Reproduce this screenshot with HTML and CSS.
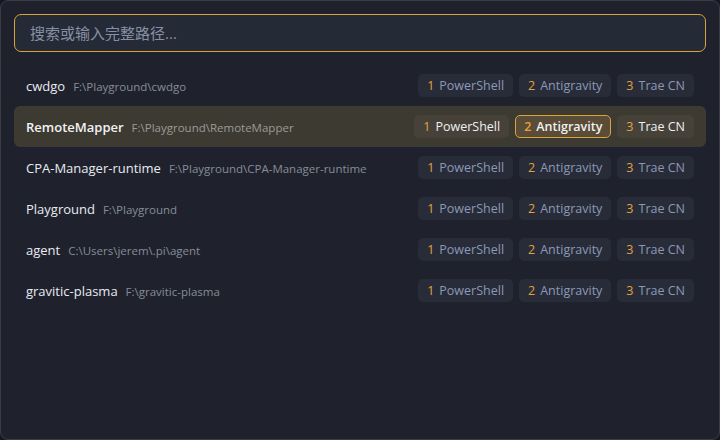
FILE: index.html
```html
<!DOCTYPE html>
<html lang="zh-CN">
<head>
<meta charset="utf-8">
<title>快速打开</title>
<link rel="stylesheet" href="styles.css">
</head>
<body>
<div class="window">
  <div class="search">
    <input class="search-input" type="text" placeholder="搜索或输入完整路径...">
  </div>
  <ul class="list">
    <li class="row">
      <div class="info"><span class="name">cwdgo</span><span class="path">F:\Playground\cwdgo</span></div>
      <div class="actions">
        <span class="chip"><b>1</b>PowerShell</span>
        <span class="chip"><b>2</b>Antigravity</span>
        <span class="chip"><b>3</b>Trae CN</span>
      </div>
    </li>
    <li class="row selected">
      <div class="info"><span class="name">RemoteMapper</span><span class="path">F:\Playground\RemoteMapper</span></div>
      <div class="actions">
        <span class="chip"><b>1</b>PowerShell</span>
        <span class="chip active"><b>2</b>Antigravity</span>
        <span class="chip"><b>3</b>Trae CN</span>
      </div>
    </li>
    <li class="row">
      <div class="info"><span class="name">CPA-Manager-runtime</span><span class="path">F:\Playground\CPA-Manager-runtime</span></div>
      <div class="actions">
        <span class="chip"><b>1</b>PowerShell</span>
        <span class="chip"><b>2</b>Antigravity</span>
        <span class="chip"><b>3</b>Trae CN</span>
      </div>
    </li>
    <li class="row">
      <div class="info"><span class="name">Playground</span><span class="path">F:\Playground</span></div>
      <div class="actions">
        <span class="chip"><b>1</b>PowerShell</span>
        <span class="chip"><b>2</b>Antigravity</span>
        <span class="chip"><b>3</b>Trae CN</span>
      </div>
    </li>
    <li class="row">
      <div class="info"><span class="name">agent</span><span class="path">C:\Users\jerem\.pi\agent</span></div>
      <div class="actions">
        <span class="chip"><b>1</b>PowerShell</span>
        <span class="chip"><b>2</b>Antigravity</span>
        <span class="chip"><b>3</b>Trae CN</span>
      </div>
    </li>
    <li class="row">
      <div class="info"><span class="name">gravitic-plasma</span><span class="path">F:\gravitic-plasma</span></div>
      <div class="actions">
        <span class="chip"><b>1</b>PowerShell</span>
        <span class="chip"><b>2</b>Antigravity</span>
        <span class="chip"><b>3</b>Trae CN</span>
      </div>
    </li>
  </ul>
</div>
</body>
</html>
```
FILE: styles.css
```css
html, body {
  margin: 0;
  padding: 0;
  background: #16181f;
}

body {
  width: 720px;
  height: 440px;
  font-family: "Open Sans", "Noto Sans", "Noto Sans CJK SC", sans-serif;
}

.window {
  box-sizing: border-box;
  width: 720px;
  height: 440px;
  background: #1f222d;
  border: 1px solid #3a3d46;
  border-radius: 8px;
  padding: 13px;
}

.search {
  display: flex;
}

.search-input {
  box-sizing: border-box;
  width: 100%;
  height: 38px;
  margin: 0;
  padding: 0 15px;
  background: #252a37;
  border: 1px solid #dba23c;
  border-radius: 7px;
  color: #e6e9ef;
  font-family: "Open Sans", "Noto Sans CJK SC", sans-serif;
  font-size: 15px;
  outline: none;
}

.search-input::placeholder {
  color: #8690a3;
}

.list {
  list-style: none;
  margin: 13px 0 0;
  padding: 0;
}

.row {
  display: flex;
  align-items: center;
  justify-content: space-between;
  height: 41px;
  padding: 0 12px;
  border-radius: 6px;
}

.row.selected {
  background: #3d3a32;
}

.info {
  display: flex;
  align-items: baseline;
  gap: 8px;
  padding-top: 1px;
}

.name {
  color: #e8ebf1;
  font-size: 13px;
}

.selected .name {
  font-weight: 600;
  color: #f2f2f2;
}

.path {
  color: #878c97;
  font-size: 11.5px;
}

.selected .path {
  color: #9b9a96;
}

.actions {
  display: flex;
  gap: 6px;
}

.chip {
  display: flex;
  align-items: center;
  gap: 5px;
  box-sizing: border-box;
  height: 23px;
  padding: 0 8px;
  background: #282c38;
  border: 1px solid transparent;
  border-radius: 5px;
  color: #8b99b6;
  font-size: 12.5px;
}

.chip b {
  font-weight: 400;
  color: #e3a23e;
}

.selected .chip {
  background: #46423a;
  color: #eef0f3;
}

.selected .chip.active {
  background: #5a4c36;
  border-color: #d9a342;
  font-weight: 600;
}

.selected .chip.active b {
  font-weight: 600;
}
```
